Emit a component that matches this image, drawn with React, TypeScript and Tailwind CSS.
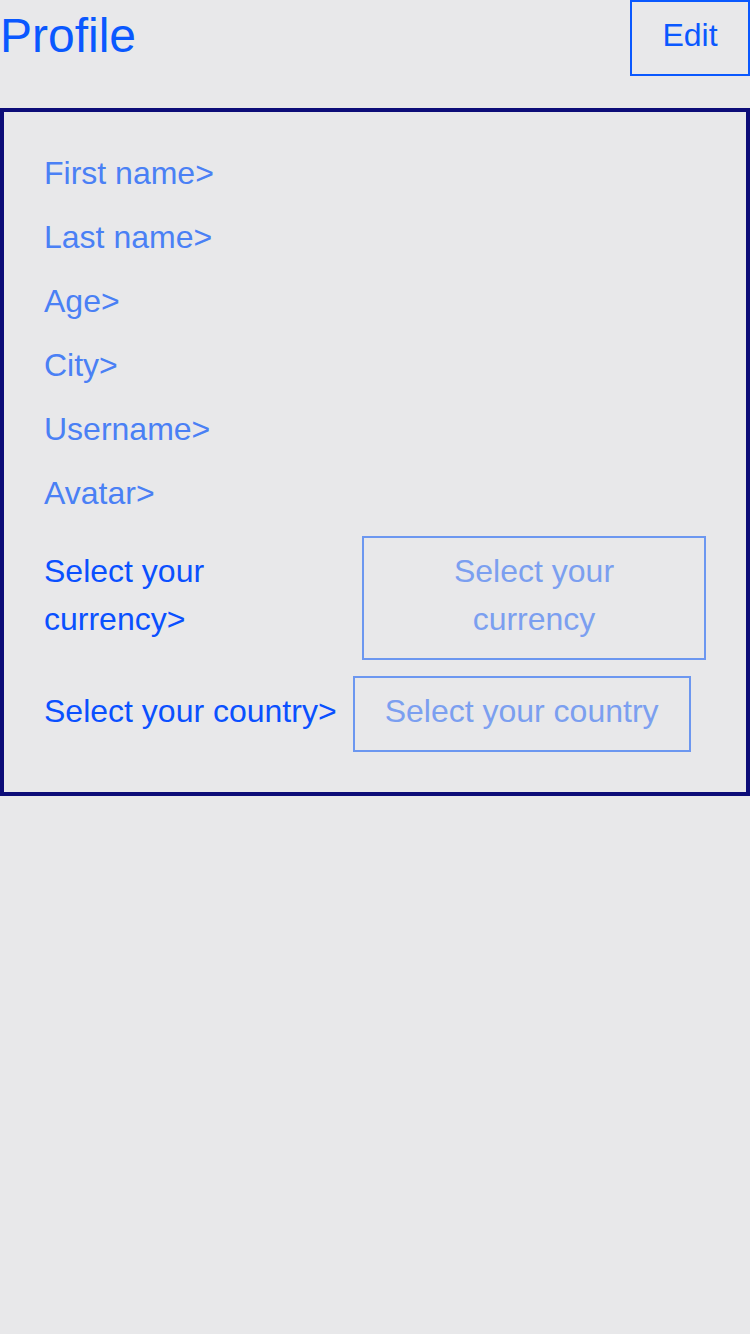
const font = { fontFamily: '"Liberation Sans", Arial, sans-serif' };

export default function App() {
  const rows = ["First name>", "Last name>", "Age>", "City>", "Username>", "Avatar>"];
  return (
    <div className="min-h-[1334px] w-[750px] bg-[#e8e8ea]" style={font}>
      <div className="flex h-[76px] items-center justify-between">
        <h1 className="mb-1 text-[48px] leading-normal text-[#0a58ff]">Profile</h1>
        <button className="h-[76px] w-[120px] self-start border-2 border-[#0a58ff] pb-[6px] text-[32px] text-[#0a58ff]">
          Edit
        </button>
      </div>

      <div className="mt-[32px] border-4 border-[#0c0c78] px-10 pb-10 pt-[29px]">
        {rows.map((r) => (
          <div key={r} className="flex h-16 items-center text-[32px] text-[#4a80f5]">
            {r}
          </div>
        ))}

        <div className="mt-[11px] flex items-center gap-4">
          <span className="mb-[6px] w-[302px] text-[32px] leading-[48px] text-[#0a50ff]">Select your currency&gt;</span>
          <div className="w-[344px] border-2 border-[#6c97f0] px-[30px] pb-[15px] pt-[9px] text-center text-[32px] leading-[48px] text-[#7b9ff0]">
            Select your currency
          </div>
        </div>

        <div className="mt-4 flex items-center gap-4">
          <span className="mb-[6px] text-[32px] leading-[48px] text-[#0a50ff]">Select your country&gt;</span>
          <div className="w-[338px] border-2 border-[#6c97f0] px-[30px] pb-[15px] pt-[9px] text-center text-[32px] leading-[48px] text-[#7b9ff0]">
            Select your country
          </div>
        </div>
      </div>
    </div>
  );
}
